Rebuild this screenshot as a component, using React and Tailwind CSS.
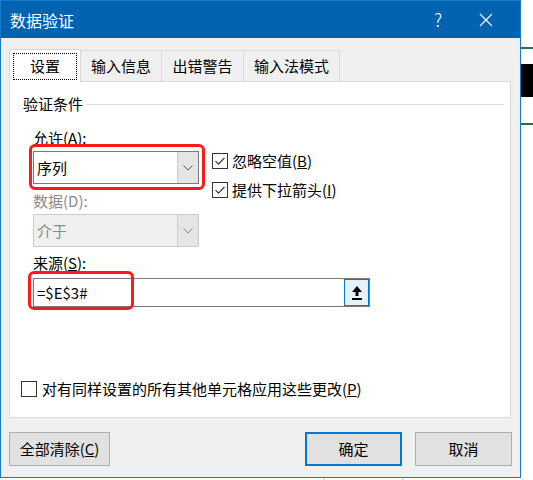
import React from 'react';

const font = { fontFamily: '"Microsoft YaHei UI", "Noto Sans CJK SC", "Noto Sans", sans-serif' };

function Check({ checked }) {
  return (
    <div className="w-[16px] h-[16px] border border-[#333] bg-white flex items-center justify-center shrink-0">
      {checked && (
        <svg width="12" height="12" viewBox="0 0 12 12">
          <path d="M1.5 6.2 L4.5 9.2 L10.5 2.8" fill="none" stroke="#333" strokeWidth="1.2" />
        </svg>
      )}
    </div>
  );
}

function Chevron({ color = '#555' }) {
  return (
    <svg width="10" height="6" viewBox="0 0 10 6">
      <path d="M0.5 0.5 L5 5 L9.5 0.5" fill="none" stroke={color} strokeWidth="1" />
    </svg>
  );
}

function Select({ value, disabled }) {
  return (
    <div
      className={`w-[166px] h-[33px] border flex ${
        disabled ? 'border-[#cccccc] bg-[#f0f0f0]' : 'border-[#7a7a7a] bg-white'
      }`}
    >
      <div className={`flex-1 flex items-center pl-[3px] text-[15px] ${disabled ? 'text-[#8a8a8a]' : 'text-black'}`}>
        {value}
      </div>
      <div className="w-[21px] border-l border-[#cccccc] bg-[#e5e5e5] flex items-center justify-center">
        <Chevron color={disabled ? '#888' : '#555'} />
      </div>
    </div>
  );
}

export default function App() {
  return (
    <div className="w-[533px] h-[480px] bg-white relative overflow-hidden text-black" style={font}>
      {/* spreadsheet behind the dialog */}
      <div className="absolute left-[521px] top-[47px] w-[12px] h-[2px] bg-[#217346]" />
      <div className="absolute left-[521px] top-[64px] w-[12px] h-[33px] bg-black" />
      <div className="absolute left-[521px] top-[123px] w-[12px] h-[2px] bg-[#217346]" />
      <div className="absolute left-[324px] top-[478px] w-[1px] h-[2px] bg-[#d4d4d4]" />
      <div className="absolute left-[402px] top-[478px] w-[1px] h-[2px] bg-[#d4d4d4]" />

      <div className="w-[521px] h-[478px] border border-[#1979ca] bg-[#f0f0f0] flex flex-col">
        {/* title bar */}
        <div className="h-[37px] bg-[#0063b1] flex items-center text-white shrink-0">
          <div className="pl-[9px] text-[16px] flex-1">数据验证</div>
          <div className="w-[40px] text-center text-[18px] font-light">?</div>
          <div className="w-[56px] flex justify-center mr-[6px]">
            <svg width="14" height="14" viewBox="0 0 14 14">
              <path d="M1 1 L13 13 M13 1 L1 13" stroke="white" strokeWidth="1.2" />
            </svg>
          </div>
        </div>

        <div className="px-[8px] pt-[11px] flex flex-col">
          {/* tabs */}
          <div className="flex items-end h-[32px] text-[15px]">
            <div className="w-[72px] h-[33px] bg-white border border-b-0 border-[#d9d9d9] flex items-center justify-center relative z-10 -mb-px">
              <div className="w-[64px] h-[27px] border border-dotted border-black flex items-center justify-center">设置</div>
            </div>
            <div className="w-[81px] h-[31px] border border-l-0 border-b-0 border-[#d9d9d9] flex items-center justify-center">输入信息</div>
            <div className="w-[82px] h-[31px] border border-l-0 border-b-0 border-[#d9d9d9] flex items-center justify-center">出错警告</div>
            <div className="w-[96px] h-[31px] border border-l-0 border-b-0 border-[#d9d9d9] flex items-center justify-center">输入法模式</div>
          </div>

          {/* panel */}
          <div className="w-[502px] h-[337px] bg-white border border-[#d9d9d9] flex flex-col text-[15px] leading-[20px] relative">
            <div className="flex items-center mt-[12px] h-[20px] pl-[13px] pr-[6px]">
              <span>验证条件</span>
              <div className="flex-1 h-px bg-[#dcdcdc] ml-[4px]" />
            </div>

            <div className="flex pl-[23px] mt-[14px]">
              <div className="flex flex-col">
                <div className="h-[20px]">
                  允许(<span className="underline">A</span>):
                </div>
                <div className="mt-[3px]">
                  <Select value="序列" />
                </div>
                <div className="h-[20px] mt-[7px] text-[#8a8a8a]">数据(D):</div>
                <div className="mt-[3px]">
                  <Select value="介于" disabled />
                </div>
              </div>
              <div className="flex flex-col ml-[13px] mt-[25px] gap-[13px]">
                <div className="flex items-center gap-[4px] h-[16px]">
                  <Check checked />
                  <span>
                    忽略空值(<span className="underline">B</span>)
                  </span>
                </div>
                <div className="flex items-center gap-[4px] h-[16px]">
                  <Check checked />
                  <span>
                    提供下拉箭头(<span className="underline">I</span>)
                  </span>
                </div>
              </div>
            </div>

            <div className="pl-[23px] mt-[6px] h-[20px]">
              来源(<span className="underline">S</span>):
            </div>
            <div className="ml-[23px] mt-[5px] w-[337px] h-[29px] border border-[#7a7a7a] bg-white flex items-center">
              <div className="flex-1 pl-[3px] text-[15px]">=$E$3#</div>
              <div className="w-[25px] h-[27px] border border-[#0078d7] bg-[#e5f1fb] flex items-center justify-center">
                <svg width="12" height="16" viewBox="0 0 12 16">
                  <path d="M6 1 L11 7 L7.5 7 L7.5 11 L4.5 11 L4.5 7 L1 7 Z" fill="black" />
                  <rect x="1" y="13" width="10" height="2" fill="black" />
                </svg>
              </div>
            </div>

            <div className="flex items-center gap-[5px] pl-[11px] mt-auto mb-[18px]">
              <Check />
              <span>
                对有同样设置的所有其他单元格应用这些更改(<span className="underline">P</span>)
              </span>
            </div>

            {/* red annotation outlines */}
            <div className="absolute left-[19px] top-[62px] w-[176px] h-[46px] border-[3px] border-[#ff1a1a] rounded-[6px]" />
            <div className="absolute left-[18px] top-[189px] w-[106px] h-[39px] border-[3px] border-[#ff1a1a] rounded-[6px]" />
          </div>

          {/* buttons */}
          <div className="flex mt-[14px] text-[15px]">
            <div className="w-[101px] h-[34px] bg-[#e1e1e1] border border-[#adadad] flex items-center justify-center">
              全部清除(<span className="underline">C</span>)
            </div>
            <div className="ml-auto w-[97px] h-[34px] bg-[#e1e1e1] border-2 border-[#0078d7] flex items-center justify-center">
              确定
            </div>
            <div className="ml-[13px] w-[97px] h-[34px] bg-[#e1e1e1] border border-[#adadad] flex items-center justify-center">
              取消
            </div>
          </div>
        </div>
      </div>
    </div>
  );
}
